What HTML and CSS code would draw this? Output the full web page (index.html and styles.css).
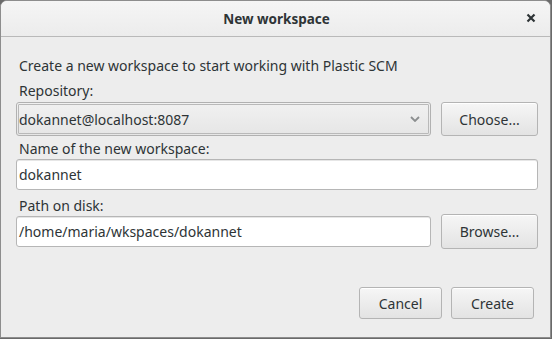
FILE: index.html
```html
<!DOCTYPE html>
<html>
<head>
<meta charset="utf-8">
<link rel="stylesheet" href="styles.css">
</head>
<body>
<div class="window">
  <div class="titlebar">
    <span class="title">New workspace</span>
    <span class="close"><svg width="10" height="10" viewBox="0 0 10 10"><path d="M1.5 1.5 L8.5 8.5 M8.5 1.5 L1.5 8.5" stroke="#2e3436" stroke-width="2.2" stroke-linecap="butt"/></svg></span>
  </div>
  <div class="content">
    <div class="intro">Create a new workspace to start working with Plastic SCM</div>
    <div class="label lbl-repo">Repository:</div>
    <div class="row row-repo">
      <div class="combo"><span>dokannet@localhost:8087</span><svg class="chev" width="10" height="6" viewBox="0 0 10 6"><path d="M1 1 L5 5 L9 1" fill="none" stroke="#8b8e8f" stroke-width="1.8"/></svg></div>
      <div class="btn side">Choose...</div>
    </div>
    <div class="label lbl-name">Name of the new workspace:</div>
    <div class="entry full">dokannet</div>
    <div class="label lbl-path">Path on disk:</div>
    <div class="row row-path">
      <div class="entry">/home/maria/wkspaces/dokannet</div>
      <div class="btn side tall">Browse...</div>
    </div>
    <div class="actions">
      <div class="btn act">Cancel</div>
      <div class="btn act">Create</div>
    </div>
  </div>
</div>
</body>
</html>
```

FILE: styles.css
```css
html, body {
  margin: 0;
  padding: 0;
}
body {
  width: 552px;
  height: 339px;
  background: #6a6a6a;
  font-family: "Noto Sans", "Open Sans", sans-serif;
  font-size: 14px;
  color: #2e3436;
  overflow: hidden;
}
.window {
  box-sizing: border-box;
  width: 551px;
  height: 338px;
  background: #ededed;
  border: 1px solid #8d8d8d;
  border-radius: 7px 7px 0 0;
  overflow: hidden;
}
.titlebar {
  position: relative;
  height: 35px;
  border-bottom: 1px solid #b9b9b9;
  background: linear-gradient(#f5f5f5, #ececec);
  display: flex;
  align-items: center;
  justify-content: center;
}
.title {
  font-weight: bold;
  font-size: 13.5px;
  color: #2e3436;
  margin-left: 2px;
}
.close {
  position: absolute;
  right: 14px;
  top: 12px;
  width: 10px;
  height: 10px;
  display: flex;
}
.content {
  padding: 0 12px 0 15px;
  display: flex;
  flex-direction: column;
}
.intro, .label {
  line-height: 18px;
  padding-left: 3px;
}
.intro {
  margin-top: 20px;
}
.lbl-repo {
  margin-top: 7px;
}
.row {
  display: flex;
  align-items: center;
  gap: 10px;
}
.row-repo {
  margin-top: 2px;
  height: 34px;
}
.combo {
  box-sizing: border-box;
  flex: 1 1 auto;
  min-width: 0;
  height: 34px;
  border: 1px solid #b1b1b1;
  border-radius: 3px;
  background: linear-gradient(#f1f1f1, #e6e6e6);
  outline: 1px solid #b9b9b9;
  outline-offset: -3px;
  display: flex;
  align-items: center;
  justify-content: space-between;
  padding: 0 10px 0 2px;
}
.chev {
  display: block;
}
.btn {
  box-sizing: border-box;
  border: 1px solid #b4b4b4;
  border-radius: 3px;
  background: linear-gradient(#f6f6f6, #e3e3e3);
  box-shadow: inset 0 1px #ffffff;
  display: flex;
  align-items: center;
  justify-content: center;
  color: #2e3436;
}
.side {
  flex: 0 0 97px;
  width: 97px;
  height: 34px;
}
.lbl-name {
  margin-top: 4px;
}
.entry {
  box-sizing: border-box;
  height: 31px;
  border: 1px solid #b6b6b6;
  border-radius: 3px;
  background: #ffffff;
  box-shadow: inset 0 1px #e6e6e6;
  display: flex;
  align-items: center;
  padding-left: 2px;
}
.full {
  margin-top: 1px;
}
.row-path .entry {
  flex: 1 1 auto;
  min-width: 0;
}
.lbl-path {
  margin-top: 7px;
}
.row-path {
  margin-top: -1px;
  height: 35px;
}
.tall {
  height: 35px;
}
.actions {
  display: flex;
  justify-content: flex-end;
  gap: 9px;
  margin-top: 38px;
  padding-right: 4px;
}
.act {
  width: 83px;
  height: 32px;
}
```
